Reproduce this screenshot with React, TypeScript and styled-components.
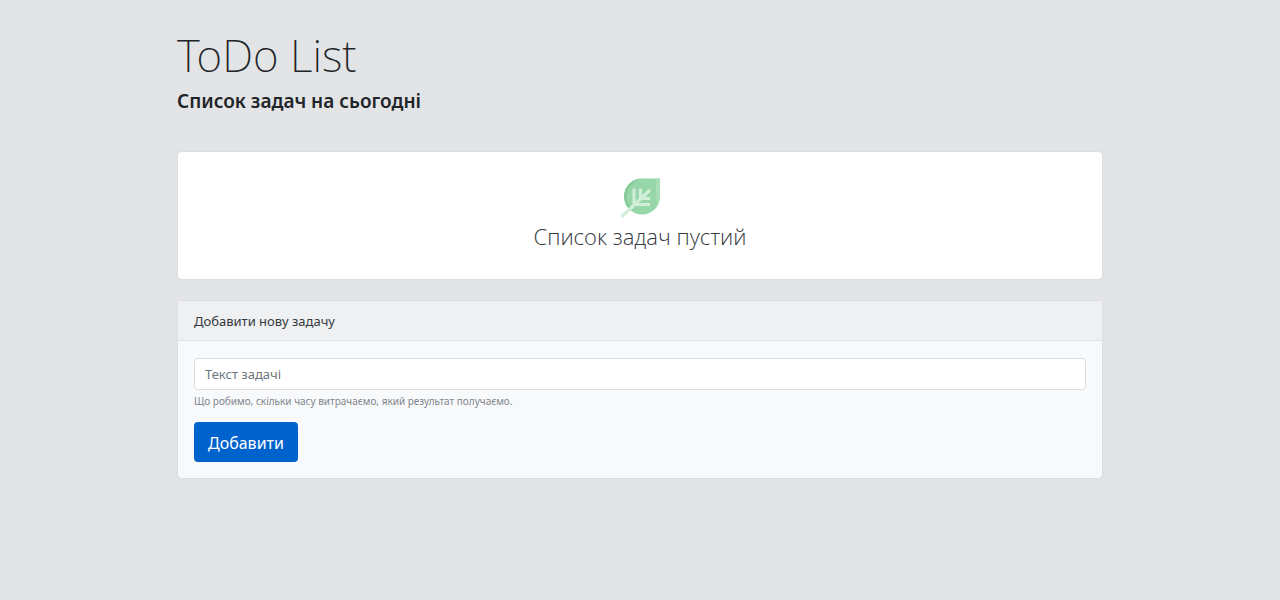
import React, { useState } from "react";
import styled, { createGlobalStyle } from "styled-components";

const GlobalStyle = createGlobalStyle`
  *, *::before, *::after { box-sizing: border-box; }
  body {
    margin: 0;
    background: #e3e4e6;
    color: #212529;
    font-family: "Segoe UI", "Noto Sans", "Open Sans", sans-serif;
    font-size: 13px;
    line-height: 20px;
  }
`;

const Container = styled.main`
  max-width: 926px;
  margin: 0 auto;
  padding: 27px 0;
`;

const Title = styled.h1`
  margin: 0 0 6px;
  font-size: 44px;
  font-weight: 200;
  line-height: 56px;
`;

const Subtitle = styled.p`
  margin: 0 0 38px;
  font-size: 19px;
  font-weight: 600;
  line-height: 24px;
`;

const Card = styled.section<{ $tone: string }>`
  margin-bottom: 20px;
  border: 1px solid #dcdddf;
  border-radius: 4px;
  background: ${(p) => p.$tone};
  background-clip: padding-box;
  overflow: hidden;
`;

const EmptyState = styled.div`
  display: flex;
  flex-direction: column;
  align-items: center;
  gap: 2px;
  padding: 26px 16px 27px;
`;

const EmptyText = styled.h2`
  margin: 0;
  font-family: "Segoe UI", "Open Sans", "Noto Sans", sans-serif;
  font-size: 22px;
  font-weight: 300;
  line-height: 32px;
  color: #343a40;
`;

const CardHeader = styled.h3`
  margin: 0;
  padding: 11px 16px 9px;
  border-bottom: 1px solid #dfe1e3;
  background: #eff0f2;
  font-size: 13px;
  font-weight: 400;
  line-height: 19px;
  color: #343a40;
`;

const Form = styled.form`
  padding: 17px 16px 16px;
`;

const TextInput = styled.input`
  display: block;
  width: 100%;
  height: 32px;
  padding: 0 10px;
  border: 1px solid #d9dde2;
  border-radius: 4px;
  background: #fff;
  color: #495057;
  font: inherit;

  &::placeholder {
    color: #6c757d;
    opacity: 1;
  }
`;

const Hint = styled.small`
  display: block;
  margin: 3px 0 12px;
  font-size: 10px;
  line-height: 17px;
  color: #7f868d;
`;

const SubmitButton = styled.button`
  display: block;
  height: 40px;
  padding: 1px 14px 0;
  border: 0;
  border-radius: 4px;
  background: #0062cc;
  color: #fff;
  font-family: inherit;
  font-size: 16px;
  line-height: 24px;
  cursor: pointer;
`;

const LeafIcon = () => (
  <svg width="40" height="40" viewBox="0 0 40 40" aria-hidden="true">
    <path d="M40 0.500V18.500A18 18 0 1 1 22 0.500Z" fill="#97d6a8" />
    <path d="M9.300 31.200A18 18 0 0 1 22 0.500H24A18 18 0 0 0 11 30Z" fill="#83ca98" />
    <path d="M36 0.500H40V18.500A18 18 0 0 1 38 26Q36 22 36 14Z" fill="#a8dfb6" />
    <path
      d="M1.500 39L30 12M14 10.500V26.500H30M20.500 10.500V20.500H30"
      fill="none"
      stroke="#d0eed8"
      strokeWidth="3.100"
    />
  </svg>
);

export default function App() {
  const [text, setText] = useState("");
  return (
    <>
      <GlobalStyle />
      <Container>
        <Title>ToDo List</Title>
        <Subtitle>Список задач на сьогодні</Subtitle>
        <Card $tone="#ffffff">
          <EmptyState>
            <LeafIcon />
            <EmptyText>Список задач пустий</EmptyText>
          </EmptyState>
        </Card>
        <Card $tone="#f8f9fb">
          <CardHeader>Добавити нову задачу</CardHeader>
          <Form onSubmit={(e) => e.preventDefault()}>
            <TextInput
              id="task"
              type="text"
              placeholder="Текст задачі"
              aria-label="Текст задачі"
              aria-describedby="task-hint"
              value={text}
              onChange={(e) => setText(e.target.value)}
            />
            <Hint id="task-hint">Що робимо, скільки часу витрачаємо, який результат получаємо.</Hint>
            <SubmitButton type="submit">Добавити</SubmitButton>
          </Form>
        </Card>
      </Container>
    </>
  );
}
